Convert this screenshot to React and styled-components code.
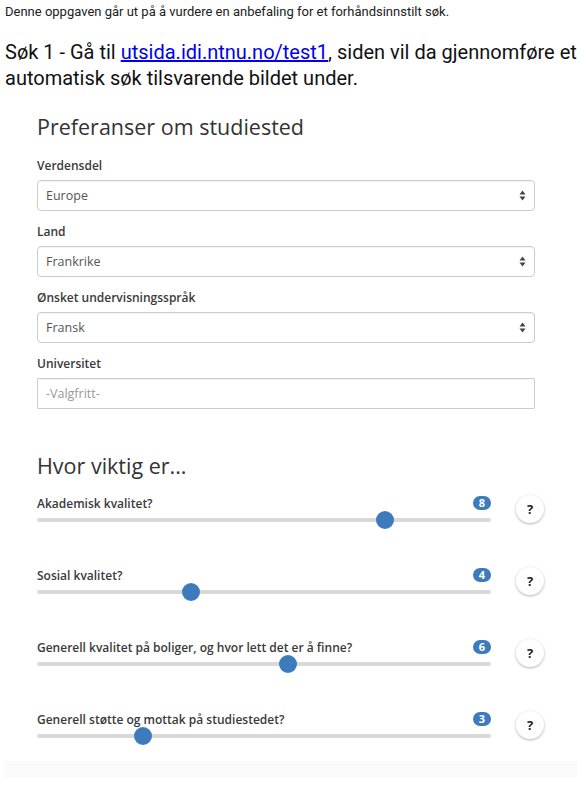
import React from 'react';
import styled, { createGlobalStyle } from 'styled-components';

const GlobalStyles = createGlobalStyle`
  html, body {
    margin: 0;
    padding: 0;
    background: #fff;
  }
  body {
    font-family: Roboto, "Liberation Sans", sans-serif;
    color: #212121;
  }
`;

const Page = styled.div`
  padding: 3px 0 0 5px;
`;

const Intro = styled.p`
  margin: 0;
  font-size: 13px;
  line-height: 18px;
`;

const Task = styled.p`
  margin: 18px 0 0;
  font-size: 20px;
  line-height: 26px;
  color: #111;
  white-space: nowrap;

  a {
    color: #0000ee;
    text-decoration: underline;
  }
`;

const Shot = styled.div`
  margin: 11px 4px 0 4px;
  padding: 12px 0 0 33px;
  font-family: "Open Sans", "Liberation Sans", sans-serif;
  color: #333;
  background: #fff;
`;

const Title = styled.h2`
  margin: ${(p) => p.$top || 0}px 0 ${(p) => p.$bottom || 16}px;
  font-size: 21.5px;
  line-height: 26px;
  font-weight: 400;
  color: #333;
`;

const Group = styled.div`
  width: 498px;
  margin-bottom: 12px;
`;

const Label = styled.div`
  font-size: 12px;
  line-height: 18px;
  font-weight: 600;
  color: #3a3a3a;
  margin-bottom: 5px;
`;

const Field = styled.div`
  height: 31px;
  box-sizing: border-box;
  border: 1px solid #ccc;
  border-radius: ${(p) => (p.$square ? 1 : 4)}px;
  padding: 0 8px 0 8px;
  display: flex;
  align-items: center;
  justify-content: space-between;
  font-size: 12.5px;
  color: ${(p) => (p.$placeholder ? '#999' : '#555')};
  box-shadow: inset 0 1px 1px rgba(0, 0, 0, 0.04);
`;

const Arrows = () => (
  <svg width="7" height="11" viewBox="0 0 7 11">
    <path d="M3.5 0.5 L6.5 4.5 H0.5 Z" fill="#444" />
    <path d="M3.5 10.5 L6.5 6.5 H0.5 Z" fill="#444" />
  </svg>
);

const Sliders = styled.div`
  display: flex;
  flex-direction: column;
  gap: 44px;
`;

const SliderRow = styled.div`
  display: flex;
  align-items: flex-start;
  gap: 25px;
`;

const SliderBody = styled.div`
  width: 454px;
`;

const SliderHead = styled.div`
  display: flex;
  justify-content: space-between;
  align-items: flex-start;
  font-size: 12px;
  font-weight: 600;
  color: #3a3a3a;
  line-height: 18px;
  margin-bottom: 5px;
`;

const Badge = styled.span`
  margin-top: 1px;
  min-width: 18px;
  height: 14px;
  border-radius: 7px;
  background: #3d7bbd;
  color: #fff;
  font-size: 11px;
  font-weight: 700;
  line-height: 14px;
  text-align: center;
`;

const Track = styled.div`
  position: relative;
  height: 4px;
  border-radius: 2px;
  background: #d9d9d9;
`;

const Thumb = styled.div`
  position: absolute;
  top: -7px;
  width: 18px;
  height: 18px;
  margin-left: -9px;
  border-radius: 50%;
  background: #3d7bbd;
`;

const Help = styled.button`
  width: 28px;
  height: 28px;
  border-radius: 50%;
  border: none;
  background: #fff;
  box-shadow: 0 1px 3px rgba(0, 0, 0, 0.3);
  font-family: "Open Sans", "Liberation Sans", sans-serif;
  font-size: 13px;
  font-weight: 700;
  color: #222;
  padding: 0;
  flex-shrink: 0;
`;

const Footer = styled.div`
  height: 16px;
  margin: 22px 4px 0 4px;
  background: #fafafa;
`;

const selects = [
  { label: 'Verdensdel', value: 'Europe' },
  { label: 'Land', value: 'Frankrike' },
  { label: 'Ønsket undervisningsspråk', value: 'Fransk' },
];

const ratings = [
  { label: 'Akademisk kvalitet?', value: 8 },
  { label: 'Sosial kvalitet?', value: 4 },
  { label: 'Generell kvalitet på boliger, og hvor lett det er å finne?', value: 6 },
  { label: 'Generell støtte og mottak på studiestedet?', value: 3 },
];

const thumbLeft = (v) => 9 + ((v - 1) / 9) * (454 - 18);

export default function App() {
  return (
    <>
      <GlobalStyles />
      <Page>
        <Intro>Denne oppgaven går ut på å vurdere en anbefaling for et forhåndsinnstilt søk.</Intro>
        <Task>
          Søk 1 - Gå til <a href="#test1">utsida.idi.ntnu.no/test1</a>, siden vil da gjennomføre et
          <br />
          automatisk søk tilsvarende bildet under.
        </Task>
      </Page>
      <Shot>
        <Title $bottom={17}>Preferanser om studiested</Title>
        {selects.map((s) => (
          <Group key={s.label}>
            <Label>{s.label}</Label>
            <Field>
              {s.value}
              <Arrows />
            </Field>
          </Group>
        ))}
        <Group>
          <Label>Universitet</Label>
          <Field $square $placeholder>-Valgfritt-</Field>
        </Group>
        <Title $top={44}>Hvor viktig er...</Title>
        <Sliders>
          {ratings.map((r) => (
            <SliderRow key={r.label}>
              <SliderBody>
                <SliderHead>
                  <span>{r.label}</span>
                  <Badge>{r.value}</Badge>
                </SliderHead>
                <Track>
                  <Thumb style={{ left: thumbLeft(r.value) }} />
                </Track>
              </SliderBody>
              <Help>?</Help>
            </SliderRow>
          ))}
        </Sliders>
      </Shot>
      <Footer />
    </>
  );
}
